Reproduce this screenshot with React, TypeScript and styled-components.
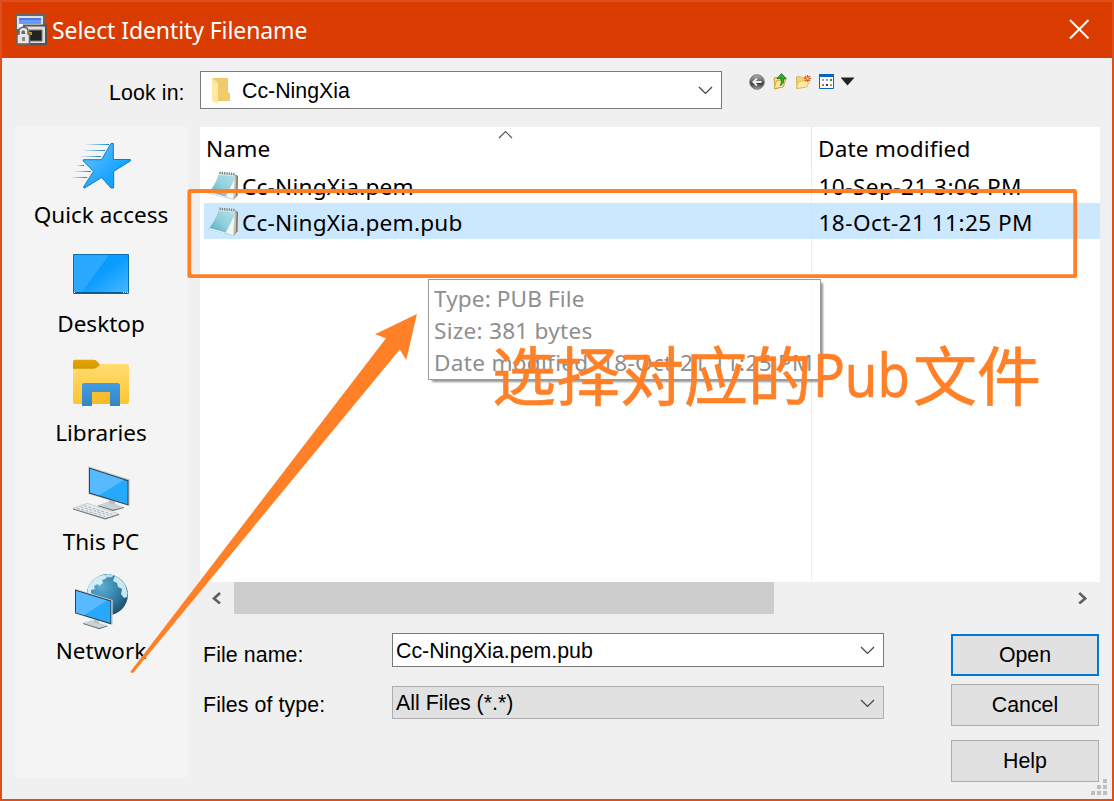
import React from "react";
import styled, { createGlobalStyle } from "styled-components";

const GlobalStyle = createGlobalStyle`
  * { box-sizing: border-box; }
  body { margin: 0; overflow: hidden; }
`;

const segoe = `"Noto Sans", "Open Sans", sans-serif`;
const arial = `"Liberation Sans", Arial, sans-serif`;

const Dialog = styled.div`
  position: relative;
  width: 1114px;
  height: 801px;
  border: 2px solid #de4f1e;
  background: #f0f0f0;
  color: #000;
  font: 21.33px/26px ${arial};
  display: flex;
  flex-direction: column;
  white-space: nowrap;
`;

const TitleBar = styled.header`
  height: 56px;
  flex: none;
  padding: 0 22px 0 13px;
  background: #da3b01;
  color: #fff;
  display: flex;
  align-items: center;
  font: 23px/32px ${segoe};
  letter-spacing: -0.09px;
`;

const TitleText = styled.h1`
  margin: 0 auto 0 5px;
  font: inherit;
`;

const LookInRow = styled.div`
  height: 69px;
  flex: none;
  padding: 13px 0 0 107px;
  display: flex;
  align-items: flex-start;
`;

const LookInLabel = styled.label`
  width: 91px;
  padding-top: 9px;
  letter-spacing: 0.12px;
`;

const Combo = styled.div<{ $h: number; $disabledLook?: boolean; $w: number; $pad?: number }>`
  width: ${(p) => p.$w}px;
  height: ${(p) => p.$h}px;
  border: 1px solid ${(p) => (p.$disabledLook ? "#adadad" : "#7a7a7a")};
  background: ${(p) => (p.$disabledLook ? "#e1e1e1" : "#fff")};
  padding: 1px 8px 0 ${(p) => p.$pad ?? 3}px;
  display: flex;
  align-items: center;
  justify-content: space-between;
`;

const ComboValue = styled.span`
  display: flex;
  align-items: center;
  gap: 11px;
`;

const Tools = styled.div`
  display: flex;
  align-items: center;
  gap: 7px;
  margin: 2px 0 0 27px;
`;

const Body = styled.div`
  display: flex;
  flex: 1;
  padding: 0 12px;
`;

const Places = styled.nav`
  width: 174px;
  height: 650px;
  background: #f4f4f4;
  margin-right: 12px;
`;

const Place = styled.div`
  height: 109px;
  padding-top: 8px;
  display: flex;
  flex-direction: column;
  align-items: center;
  gap: 4px;
  font: 22.5px/32px ${segoe};
`;

const Main = styled.main`
  width: 900px;
`;

const FileList = styled.section`
  position: relative;
  height: 455px;
  background: #fff;
  font: 22.6px/32px ${segoe};
`;

const HeadRow = styled.div`
  height: 40px;
  display: grid;
  grid-template-columns: 612px 1fr;
  letter-spacing: 0.14px;
  > * { padding: 5.5px 0 0 6px; border-right: 1px solid #e5e5e5; }
  > :last-child { border: 0; }
`;

const FileRow = styled.div<{ $selected?: boolean }>`
  height: 36px;
  margin-left: 4px;
  padding-left: 2px;
  display: grid;
  grid-template-columns: 612.5px 1fr;
  background: ${(p) => (p.$selected ? "#cce8ff" : "transparent")};
`;

const NameCell = styled.span`
  display: flex;
  align-items: center;
  gap: 4px;
  letter-spacing: 0.22px;
`;

const FileName = styled.span`
  padding-top: 3px;
`;

const DateCell = styled.span`
  padding-top: 3.5px;
  letter-spacing: 0.44px;
`;

const ColumnLine = styled.i`
  position: absolute;
  left: 611px;
  top: 40px;
  bottom: 1px;
  width: 1px;
  background: rgba(200, 220, 240, 0.38);
`;

const SortMark = styled.svg`
  position: absolute;
  left: 298px;
  top: 3px;
`;

const ScrollBar = styled.div`
  height: 32px;
  display: flex;
  align-items: center;
  justify-content: space-between;
  padding: 0 12px;
`;

const Thumb = styled.div`
  width: 540px;
  height: 32px;
  margin: 0 auto 0 12px;
  background: #cdcdcd;
`;

const Form = styled.div`
  display: grid;
  grid-template-columns: 192px 559px 148px;
  padding-top: 19px;
`;

const Column = styled.div<{ $gap: number; $top?: number }>`
  display: flex;
  flex-direction: column;
  gap: ${(p) => p.$gap}px;
  padding-top: ${(p) => p.$top ?? 0}px;
`;

const FieldLabel = styled.label`
  padding-left: 3px;
  letter-spacing: 0.1px;
`;

const Button = styled.button<{ $primary?: boolean; $gap?: number }>`
  height: 42px;
  margin: 0 0 ${(p) => p.$gap ?? 0}px;
  padding: 0;
  border: ${(p) => (p.$primary ? "2px solid #0078d7" : "1px solid #adadad")};
  background: #e1e1e1;
  color: #000;
  font: inherit;
`;

const Grip = styled.svg`
  position: absolute;
  right: 5px;
  bottom: 4px;
`;

const Tooltip = styled.div`
  position: absolute;
  left: 228px;
  top: 152px;
  width: 393px;
  height: 101px;
  padding: 3px 5px;
  border: 1px solid #9a9a9a;
  background: rgba(255, 255, 255, 0.6);
  color: #8e8e8e;
  box-shadow: 3px 3px 2px -1px rgba(0, 0, 0, 0.42);
`;

const TipLine = styled.div<{ $track: number }>`
  letter-spacing: ${(p) => p.$track}px;
`;

const Markup = styled.svg`
  position: absolute;
  left: -2px;
  top: -2px;
  pointer-events: none;
`;

const Note = styled.div`
  position: absolute;
  left: 490px;
  top: 322px;
  display: flex;
  color: #ff8027;
  font: 64px/96px "Noto Sans CJK SC", sans-serif;
  -webkit-text-stroke: 0.6px #ff8027;
`;

const NoteLatin = styled.span`
  width: 101px;
  padding: 1px 0 0 1px;
  font: 60px/98px ${segoe};
  transform: scaleX(0.88);
  transform-origin: left;
`;

const AppIcon = () => (
  <svg width="32" height="32" viewBox="0 0 32 32">
    <path d="M1 1h28v15H1z" fill="#dedede" stroke="#666" strokeWidth="2" />
    <path d="M4 4h22v9H4z" fill="#6b9aff" />
    <path d="M4 4h22v2H4z" fill="#4a79df" />
    <path d="M4 10h22v5H4z" fill="#fff" />
    <path d="M9 11.500h22v18.500H9z" fill="#dedede" stroke="#555" strokeWidth="2" />
    <path d="M14 16h13v11H14z" fill="#222" stroke="#777" />
    <path d="M14 18h3v3h-3z" fill="#c99c00" />
    <path d="M4 20v-3c0-5 9-5 9 0v3h1.500v10H2V20z" fill="#e6e6e6" stroke="#666" strokeWidth="1.500" />
    <path d="M6.500 20v-2c0-2 3.500-2 3.500 0v2z" fill="#666" />
    <path d="M7 23h3v4H7z" fill="#888" />
  </svg>
);

const SmallFolder = () => (
  <svg width="20" height="28" viewBox="0 0 20 28">
    <path d="M1 1h16v14l2 2v7H6z" fill="#f2cd68" />
    <path d="M7 1h10v14l2 2v7H7z" fill="#efcb6c" />
    <path d="M1 1l6 5v21l-6-3z" fill="#ffe9a2" />
  </svg>
);

const Chevron = () => (
  <svg width="15" height="9" viewBox="0 0 15 9">
    <path d="M1 1l6.500 6.400L14 1" fill="none" stroke="#444" strokeWidth="1.300" />
  </svg>
);

const BackIcon = () => (
  <svg width="16" height="16" viewBox="0 0 16 16">
    <defs>
      <linearGradient id="bk" x2="0" y2="1">
        <stop stopColor="#b5b5b5" /><stop offset=".45" stopColor="#666" /><stop offset=".6" stopColor="#3a3a3a" /><stop offset="1" stopColor="#a5a5a5" />
      </linearGradient>
    </defs>
    <circle cx="8" cy="8" r="7.300" fill="url(#bk)" stroke="#777" />
    <path d="M12.500 8H4.500M8 4.500L4.300 8 8 11.500" fill="none" stroke="#eee" strokeWidth="1.800" />
  </svg>
);

const UpIcon = () => (
  <svg width="16" height="17" viewBox="0 0 16 17">
    <path d="M2 5l4-1 1 1 5-1v9l-9 3z" fill="#f4d675" stroke="#c79b2d" strokeWidth=".8" />
    <path d="M2 15.500L4.500 8l9.500-2-3 8z" fill="#ffeaa0" stroke="#c79b2d" strokeWidth=".8" />
    <path d="M5 5.500L9.500.6l4.700 4.900h-2.500c.3 3.500-.2 5.500-3.500 7 1.500-2.500 1.200-4.500 0.600-7z" fill="#2fae2b" stroke="#14751a" strokeWidth=".8" />
  </svg>
);

const NewFolderIcon = () => (
  <svg width="17" height="16" viewBox="0 0 17 16">
    <path d="M1.500 3l4-.5 1 1.500 5-.5v9l-9.500 2z" fill="#f4d675" stroke="#cfa23c" strokeWidth=".8" />
    <path d="M1.500 14.500l2-7 11-1.500-2.500 7z" fill="#ffeaa0" stroke="#dcb458" strokeWidth=".8" />
    <path d="M12.500 1v7M9 4.500h7M10 2l5 5M15 2l-5 5" stroke="#f04a22" strokeWidth="1.200" />
    <circle cx="12.500" cy="4.500" r="1.300" fill="#ffd55b" />
  </svg>
);

const ViewsIcon = () => (
  <svg width="15" height="15" viewBox="0 0 15 15">
    <path d="M.5.5h14v14H.5z" fill="#fff" stroke="#0a64c4" />
    <path d="M0 0h15v3H0z" fill="#0a64c4" />
    <path d="M3 5h2v2H3zM7 5h2v2H7z" fill="#9b96c8" />
    <path d="M11 5h2v2h-2z" fill="#249a2d" />
    <path d="M3 10h2v2H3z" fill="#ef5a36" />
    <path d="M7 10h2v2H7z" fill="#0a3f9e" />
    <path d="M11 10h2v2h-2z" fill="#c9a21c" />
  </svg>
);

const NotepadIcon = () => (
  <svg width="32" height="32" viewBox="0 0 32 32">
    <defs>
      <linearGradient id="np" x1="0" y1="1" x2="1" y2="0">
        <stop stopColor="#3f9fb4" /><stop offset=".5" stopColor="#8fcfdb" /><stop offset="1" stopColor="#b5e1ea" />
      </linearGradient>
    </defs>
    <path d="M28 5l4 2-.5 19.500-4 4z" fill="#7d7057" />
    <path d="M28.500 6l2 1-.5 20-2.500 3z" fill="#c9bda4" />
    <path d="M13 4.500L29 6 27.500 30.500 2 24.500C7 19 10 13 13 4.500z" fill="url(#np)" />
    <path d="M28.800 9l-9.300 19 8 2.500z" fill="#f3f8fa" stroke="#b5cbd2" strokeWidth=".5" />
    <path d="M2 24.500l17.200 4 .5-1-16-4.500z" fill="#e4f2f4" />
    <path d="M13 5l16 1.300" stroke="#d5e3e6" strokeWidth="2.500" />
    <path d="M13.500 3.800l15.500 1.300" stroke="#687d84" strokeWidth="2.400" strokeDasharray="1.200 1.100" />
  </svg>
);

const QuickAccessIcon = () => (
  <svg width="60" height="60" viewBox="0 0 60 60">
    <defs>
      <linearGradient id="st" x2="1" y2="1">
        <stop stopColor="#6ac4ff" /><stop offset=".7" stopColor="#14a2ff" />
      </linearGradient>
      <linearGradient id="sp"><stop stopColor="#1684ca" stopOpacity=".05" /><stop offset="1" stopColor="#1684ca" /></linearGradient>
    </defs>
    <path d="M14 9h24v1H14z" fill="url(#sp)" />
    <path d="M12 15h22v1H12z" fill="url(#sp)" />
    <path d="M9 21h21v1H9z" fill="url(#sp)" />
    <path d="M6 30h7v1H6z" fill="url(#sp)" />
    <path d="M3 36h17v1H3z" fill="url(#sp)" />
    <path d="M0 42h16v1H0z" fill="url(#sp)" />
    <path d="M40 8.500h2.300V24.500H59.300V26L42.700 36.300V53H40L30.600 42.500 13.300 53.200 12.500 52 22.600 36.300 12.300 26V24.700H30.600z" fill="url(#st)" stroke="#1279ba" strokeLinejoin="round" />
  </svg>
);

const DesktopIcon = () => (
  <svg width="60" height="60" viewBox="0 0 60 60">
    <defs>
      <linearGradient id="dk" x2="1" y2="1">
        <stop offset=".5" stopColor="#0a9cff" /><stop offset="1" stopColor="#49b9ff" />
      </linearGradient>
    </defs>
    <path d="M2.500 10.500h55v39h-55z" fill="url(#dk)" stroke="#0d70ad" />
    <path d="M3 11h35L11 48H3z" fill="#2ba9ff" />
    <path d="M3 48h54v1.500H3z" fill="#0b568d" />
    <path d="M3 48h1v1H3zM52 48h1v1h-1zM54 48h1v1h-1zM56 48h1v1h-1z" fill="#fff" />
  </svg>
);

const LibrariesIcon = () => (
  <svg width="60" height="60" viewBox="0 0 60 60">
    <defs>
      <linearGradient id="lb" x2="0" y2="1"><stop stopColor="#ffdc71" /><stop offset="1" stopColor="#ffc531" /></linearGradient>
      <linearGradient id="la" x2="0" y2="1"><stop stopColor="#429ce2" /><stop offset="1" stopColor="#3285c0" /></linearGradient>
      <linearGradient id="lt" x2="0" y2="1"><stop stopColor="#e4a600" /><stop offset="1" stopColor="#d59600" /></linearGradient>
    </defs>
    <path d="M2 13h24l4-2h26q2 0 2 2v36q0 2-2 2H4q-2 0-2-2z" fill="url(#lb)" />
    <path d="M2 9q0-2.300 2-2.300h19q2 0 3.500 2l2.500 2.800-2.500 2.500q-2 1.700-4 1.700H2z" fill="url(#lt)" />
    <path d="M21 39h18v12H21z" fill="#e4a818" opacity=".35" />
    <path d="M11 53V32.500q0-2.500 2.500-2.500h33q2.500 0 2.500 2.500V53H39V39H21v14z" fill="url(#la)" />
  </svg>
);

const ThisPcIcon = () => (
  <svg width="60" height="60" viewBox="0 0 60 60">
    <path d="M27 43.300L38 39.500 53 45 42.300 48.200z" fill="#cbd2d7" />
    <path d="M27 43.300l15.300 4.500L53 45v1l-10.700 3L27 44.300z" fill="#68747b" />
    <path d="M38 36l6 2v5l-6-2z" fill="#b8c1c7" />
    <path d="M17.300 4.300L58.700 17.300V44L17.300 32z" fill="#c4cbd0" />
    <path d="M18 5.500L57.500 18.200V43.500L18 31.500z" fill="#33444f" />
    <path d="M19 7L56.500 19.200V42.200L19 30.600z" fill="#27a9fb" />
    <path d="M19 7L53 18 28 33.300 19 30.600z" fill="#57baff" />
    <path d="M2 46.300L16.300 41.300 48 52 34.300 56.300z" fill="#e9edef" stroke="#b8c1c7" strokeWidth=".7" />
    <path d="M2 46.500l32.300 9.800L48 52v1l-13.700 4.500L2 47.500z" fill="#6c777e" />
    <path d="M6 46l28.500 8.500M9.500 44.800L38 53.300M13 43.500l28.500 9" stroke="#b3bec5" strokeWidth="1.200" strokeDasharray="3 1.500" />
  </svg>
);

const NetworkIcon = () => (
  <svg width="60" height="60" viewBox="0 0 60 60">
    <defs>
      <radialGradient id="gl" cx=".35" cy=".3" r=".8">
        <stop stopColor="#5cafd3" /><stop offset=".55" stopColor="#337fa7" /><stop offset="1" stopColor="#194862" />
      </radialGradient>
    </defs>
    <circle cx="36.300" cy="23.700" r="20.600" fill="url(#gl)" />
    <path d="M17 17C20 9 26 5 33 4l4 1-3 3-3 1 1 3-4 3-1-2-4 2 1 3-4 1 0 3 4 2-1 3-5-2-2-2z" fill="#d3ecf4" />
    <path d="M44 5c5 2 8 5 10.500 10l2 7-.5 4-3 1-3-4 1-5-4-2-1-4-4-2 1-3z" fill="#c9e5ed" />
    <path d="M32 5l5-2 6 1.500-3 2-4-.5z" fill="#b7deeb" />
    <path d="M12 52l8.700-3 15.600 5.500-8 2.500z" fill="#cbd2d7" />
    <path d="M12 52l16.300 5 8-2.500v1l-8 2.700L12 53z" fill="#68747b" />
    <path d="M23 48l5 2v3l-5-1.500z" fill="#b8c1c7" />
    <path d="M4 17.700L41.700 29V53.700L4 42.300z" fill="#c4cbd0" />
    <path d="M4 18.500L40.200 29.500V53.400L4 42.300z" fill="#33444f" />
    <path d="M5 20L39.300 30.500V52L5 41.500z" fill="#27a9fb" />
    <path d="M5 20L36 29.500 13 44 5 41.500z" fill="#57baff" />
  </svg>
);

const places = [
  { name: "Quick access", Icon: QuickAccessIcon },
  { name: "Desktop", Icon: DesktopIcon },
  { name: "Libraries", Icon: LibrariesIcon },
  { name: "This PC", Icon: ThisPcIcon },
  { name: "Network", Icon: NetworkIcon },
];

const files = [
  { name: "Cc-NingXia.pem", date: "10-Sep-21 3:06 PM" },
  { name: "Cc-NingXia.pem.pub", date: "18-Oct-21 11:25 PM", selected: true },
];

export default function App() {
  return (
    <Dialog>
      <GlobalStyle />
      <TitleBar>
        <AppIcon />
        <TitleText>Select Identity Filename</TitleText>
        <svg width="22" height="22" viewBox="0 0 22 22">
          <path d="M2 1l18.500 18.500M20.500 1L2 19.500" stroke="#fff" strokeWidth="2" />
        </svg>
      </TitleBar>
      <LookInRow>
        <LookInLabel>Look in:</LookInLabel>
        <Combo $w={522} $h={38} $pad={10}>
          <ComboValue><SmallFolder /><span>Cc-NingXia</span></ComboValue>
          <Chevron />
        </Combo>
        <Tools>
          <BackIcon />
          <UpIcon />
          <NewFolderIcon />
          <ViewsIcon />
          <svg width="14" height="9" viewBox="0 0 14 9"><path d="M-.5.5h14L6.500 8.500z" fill="#222" /></svg>
        </Tools>
      </LookInRow>
      <Body>
        <Places>
          {places.map(({ name, Icon }) => (
            <Place key={name}><Icon />{name}</Place>
          ))}
        </Places>
        <Main>
          <FileList>
            <HeadRow><span>Name</span><span>Date modified</span></HeadRow>
            {files.map((f) => (
              <FileRow key={f.name} $selected={f.selected}>
                <NameCell><NotepadIcon /><FileName>{f.name}</FileName></NameCell>
                <DateCell>{f.date}</DateCell>
              </FileRow>
            ))}
            <ColumnLine />
            <SortMark width="15" height="9" viewBox="0 0 15 9">
              <path d="M1 8l6.500-6.500L14 8" fill="none" stroke="#555" strokeWidth="1.200" />
            </SortMark>
            <Tooltip>
              <TipLine $track={0.1}>Type: PUB File</TipLine>
              <TipLine $track={0.24}>Size: 381 bytes</TipLine>
              <TipLine $track={0.29}>Date modified: 18-Oct-21 11:25 PM</TipLine>
            </Tooltip>
          </FileList>
          <ScrollBar>
            <svg width="10" height="12" viewBox="0 0 10 12"><path d="M8 1L2 6.500l6 5" fill="none" stroke="#606060" strokeWidth="2.600" /></svg>
            <Thumb />
            <svg width="10" height="12" viewBox="0 0 10 12"><path d="M1.200 1l6 5.500-6 5" fill="none" stroke="#606060" strokeWidth="2.600" /></svg>
          </ScrollBar>
          <Form>
            <Column $gap={24} $top={9}>
              <FieldLabel>File name:</FieldLabel>
              <FieldLabel>Files of type:</FieldLabel>
            </Column>
            <Column $gap={19}>
              <Combo $w={492} $h={34}><span>Cc-NingXia.pem.pub</span><Chevron /></Combo>
              <Combo $w={492} $h={33} $disabledLook><span>All Files (*.*)</span><Chevron /></Combo>
            </Column>
            <Column $gap={0} $top={1}>
              <Button $primary $gap={8}>Open</Button>
              <Button $gap={14}>Cancel</Button>
              <Button>Help</Button>
            </Column>
          </Form>
        </Main>
      </Body>
      <Grip width="16" height="16" viewBox="0 0 16 16">
        <path d="M12 0h4v4h-4zM6 6h4v4H6zM12 6h4v4h-4zM0 12h4v4H0zM6 12h4v4H6zM12 12h4v4h-4z" fill="#bfbfbf" />
      </Grip>
      <Markup width="1114" height="801" viewBox="0 0 1114 801">
        <rect x="189.300" y="191" width="885.900" height="85.200" rx="1" fill="none" stroke="#ff8027" strokeWidth="3.800" />
        <path d="M416.900 314L375 334.300 386 338.300 130.500 671.500q.8 2.200 2.800 1.200L399.800 349.500 406.300 360z" fill="#ff8027" />
      </Markup>
      <Note>选择对应的<NoteLatin>Pub</NoteLatin>文件</Note>
    </Dialog>
  );
}
